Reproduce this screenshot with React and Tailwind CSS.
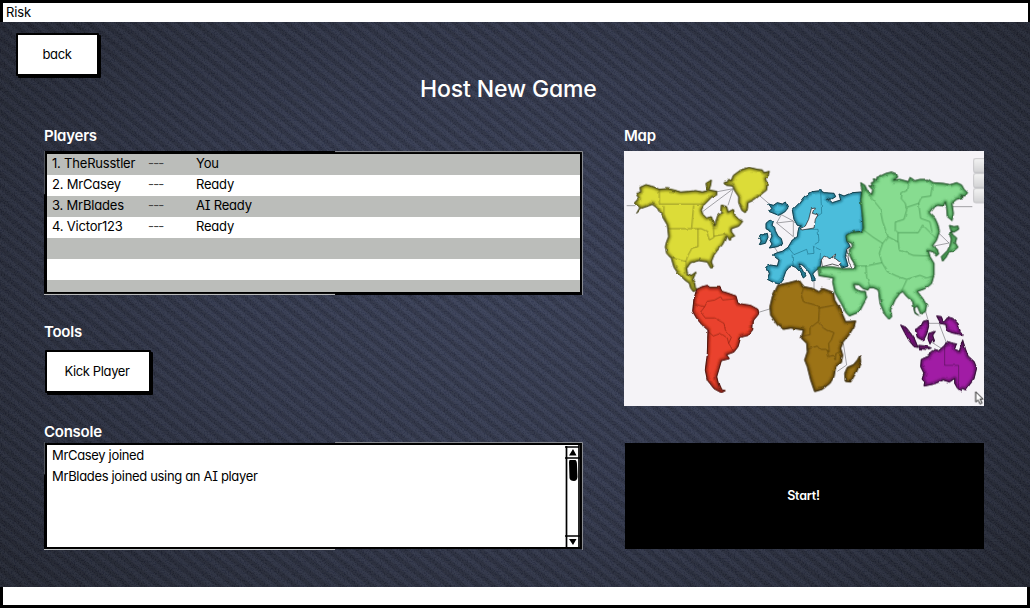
import React from "react";

const players = [
  ["1. TheRusstler", "You"],
  ["2. MrCasey", "Ready"],
  ["3. MrBlades", "AI Ready"],
  ["4. Victor123", "Ready"],
  null,
  null,
  null,
];

function Land({ id, d, fill, shade, lines }) {
  return (
    <g strokeLinejoin="round">
      <clipPath id={id}>
        <path d={d} />
      </clipPath>
      <path d={d} fill={fill} />
      <g clipPath={`url(#${id})`}>
        <path d={d} fill="none" stroke={shade} strokeWidth="12" strokeOpacity="0.75" filter="url(#soft)" />
      </g>
      {lines && <path d={lines} fill="none" stroke={shade} strokeOpacity="0.75" strokeWidth="2.2" />}
      <path d={d} fill="none" stroke={shade} strokeWidth="3" />
      <path d={d} fill="none" stroke="#111" strokeOpacity="0.55" strokeWidth="2.2" />
    </g>
  );
}

function WorldMap() {
  return (
    <svg viewBox="0 3 1080 765" className="block h-[255px] w-[360px] bg-[#f5f3f7]">
      <defs>
        <filter id="soft" x="-10%" y="-10%" width="120%" height="120%">
          <feGaussianBlur stdDeviation="3" />
        </filter>
        <filter id="rough" x="0" y="0" width="100%" height="100%">
          <feTurbulence type="fractalNoise" baseFrequency="0.05" numOctaves="1" seed="4" />
          <feDisplacementMap in="SourceGraphic" scale="8" xChannelSelector="R" yChannelSelector="G" />
        </filter>
        <linearGradient id="tab" x1="0" y1="0" x2="0" y2="1">
          <stop offset="0" stopColor="#f4f4f4" />
          <stop offset="1" stopColor="#d2d2d4" />
        </linearGradient>
      </defs>
      <g fill="none" stroke="#77777c" strokeWidth="2">
        <path d="M8 167H34M270 127L328 116L237 184M328 116L312 166M408 138L436 162M983 170H1045M472 194L508 213L458 219L472 194M458 219L508 260M508 213V260M450 290L462 308" />
        <path d="M404 487L440 476M570 390V418M655 487L663 475M945 250L975 279L930 288M905 485L915 520L945 520L966 575M920 575L960 600M658 580L668 645L640 664" />
      </g>
      <g filter="url(#rough)">
        <Land
          id="na"
          fill="#dcdc39"
          shade="#5b5a14"
          d="M30 160L44 145L36 130L50 126L48 112L66 104L88 110L106 118L130 116L150 120L170 126L195 124L215 122L235 126L250 122L246 100L262 90L260 105L255 120L278 124L278 135L262 142L250 155L240 165L232 180L236 192L248 204L262 200L266 210L272 230L276 212L282 195L290 190L292 165L308 170L312 186L328 178L332 195L345 208L356 214L345 228L322 236L322 245L332 258L322 262L318 272L308 258L295 285L285 295L270 315L262 335L268 352L260 354L250 336L225 332L200 338L188 355L190 370L202 376L216 366L206 390L212 400L214 412L220 418L208 425L200 414L196 400L180 388L160 367L150 352L142 325L128 310L124 290L128 275L134 260L130 225L112 195L100 175L85 163L72 168L52 175L38 190L48 172Z"
          lines="M106 118V162H240M120 168V192L133 236H232M209 166L203 234M222 236V290L204 294L192 316L186 334L160 328L134 318M232 236L248 244L256 270L270 262L268 228M270 258L306 252M186 334L188 355"
        />
        <Land
          id="gl"
          fill="#dcdc39"
          shade="#5b5a14"
          d="M300 98L310 96L314 88L322 92L328 76L350 60L375 52L400 58L415 60L420 68L436 64L432 78L424 86L430 100L428 120L408 136L390 150L372 158L370 176L364 188L354 182L344 158L344 140L332 122L326 108L304 106Z"
        />
        <g transform="translate(360 90)">
          <Land
            id="eu"
            fill="#4bbddb"
            shade="#17647a"
            d="M352 36L358 90L358 152L330 158L308 165L308 182L318 198L308 210L304 230L312 258L295 264L280 250L265 242L248 245L232 242L228 262L215 272L206 282L214 298L204 300L200 285L190 270L175 255L165 252L178 275L186 287L178 294L170 278L155 262L145 258L135 262L125 275L118 295L105 312L90 308L70 298L76 280L68 262L78 255L100 258L105 240L85 225L100 218L115 214L132 202L145 180L160 170L162 155L165 142L172 138L160 136L150 118L145 90L165 70L180 50L205 35L230 32L240 38L270 40L275 50L262 58L250 54L265 68L290 60L285 42L300 48L325 38Z"
            lines="M230 32L233 100L216 112M170 148L222 148L225 185L208 196L210 220L192 222L188 208L150 224L132 202M144 224L148 258M210 200L230 210L228 240"
          />
          <path d="M168 146L184 138L194 118L202 86L214 84L208 100L222 104L214 118L210 144L174 150Z M232 240L240 228L258 236L275 222L272 234L292 250L285 258L265 252L235 260Z M308 208L320 200L325 215L322 235L336 255L326 266L315 247Z" fill="#f5f3f7" stroke="#222" strokeWidth="2.2" />
          <Land id="ice" fill="#4bbddb" shade="#17647a" d="M74 72L88 76L100 68L115 72L124 66L132 84L122 96L104 106L84 98L74 94L84 86Z" />
          <Land id="gb" fill="#4bbddb" shade="#17647a" d="M66 130L80 118L88 124L84 136L92 142L94 152L102 168L112 176L116 192L100 200L76 204L84 192L78 182L84 168L76 152L66 146Z" />
          <Land id="ie" fill="#4bbddb" shade="#17647a" d="M50 166L70 160L72 172L64 190L46 194L52 182L44 176Z" />
        </g>
        <Land
          id="sa"
          fill="#ea432d"
          shade="#761a10"
          d="M218 418L234 410L250 406L258 412L288 412L294 424L308 428L336 438L342 460L380 466L402 478L404 492L388 512L386 540L372 556L350 562L342 590L330 606L308 614L316 626L292 632L284 660L278 680L284 704L290 718L304 722L292 728L270 716L250 690L244 660L250 610L252 540L234 525L218 505L206 484L210 446Z"
          lines="M208 460L242 470L250 454L272 450L290 440L296 450L336 446M242 470L230 486L244 504L272 504L300 520L304 540L322 562L314 580L330 606M252 544L268 558L290 550L310 564L314 580"
        />
        <g transform="translate(360 90)">
          <Land
            id="af"
            fill="#9c7316"
            shade="#4a3508"
            d="M102 315L135 308L165 300L180 320L205 325L225 335L235 325L268 337L272 360L290 390L305 425L335 423L330 440L315 465L298 485L290 505L296 525L292 548L275 560L270 590L258 610L235 628L212 635L200 600L190 560L182 540L190 515L188 490L172 475L178 450L140 444L118 448L100 435L80 405L78 380L85 350Z"
            lines="M180 320L172 345L180 366L210 374L226 384L270 376M226 384L224 424L198 444V464L178 468M224 428L240 446L270 458L262 480L254 490L256 516L246 508H228L220 498L190 508M250 510L254 530L268 526L274 540L276 520L290 515"
          />
          <Land id="mg" fill="#9c7316" shade="#4a3508" d="M348 526L350 546L338 575L320 606L304 604L302 580L310 562L328 554L340 540Z" />
        </g>
        <g transform="translate(528 0)">
          <Land
            id="as"
            fill="#87dc90"
            shade="#2f7a3a"
            d="M182 98L195 106L200 122L215 133L218 120L206 107L216 108L214 98L222 96L220 86L232 90L230 82L245 76L258 70L275 66L290 72L293 82L280 90L300 88L325 95L330 82L345 92L360 88L385 88L400 98L430 100L450 104L470 98L485 105L492 118L503 128L495 138L482 136L490 142L470 148L456 160L460 190L456 212L442 200L440 175L436 156L430 168L414 166L400 172L388 188L405 205L412 220L418 245L410 270L398 287L412 298L416 312L408 318L400 306L385 302L390 320L402 340L402 375L395 400L385 410L370 418L352 424L368 445L380 465L376 485L362 492L352 468L342 475L346 488L356 496L345 490L338 455L320 440L308 425L300 430L285 450L272 480L275 500L267 508L255 495L240 460L235 420L220 413L208 413L204 420L190 416L176 404L162 403L165 416L180 424L196 424L200 445L190 463L178 486L148 498L138 488L125 463L105 428L98 396L100 384L57 377L54 352L92 350L130 356L165 355L165 345L150 318L148 298L158 290L155 280L142 275L138 258L150 248L185 245L190 235L188 205L182 150L186 120Z"
            lines="M190 115L218 148L240 175L248 215L264 260L294 276V248L286 240V216L312 208L320 180L316 160L304 146L306 128L320 122L324 96M320 172L356 160L364 142L392 138L398 100M356 160L362 205L390 215L396 245M294 248H355L368 225L408 265M295 276L298 300L340 316L390 318M188 238L220 262L248 280L264 260M248 280L238 310L246 338L198 348L200 380L210 410M246 338L262 365L290 378L320 388L360 376L380 384L400 378M198 348L165 348M320 390L304 425"
          />
          <Land id="jp" fill="#87dc90" shade="#2f7a3a" d="M448 226L462 230L474 228L476 238L462 246L454 244L458 254L470 264L466 278L474 292L462 302L446 308L438 322L428 334L424 320L442 302L450 286L454 268L450 256L454 246Z" />
        </g>
        <g transform="translate(528 378)">
          <Land id="su" fill="#a11fa5" shade="#45094a" d="M302 147L318 154L332 172L344 190L354 214L342 212L326 192L314 170Z" />
          <Land id="bo" fill="#a11fa5" shade="#45094a" d="M346 160L362 152L370 136L384 132L386 150L380 174L370 194L352 184Z" />
          <Land id="ja" fill="#a11fa5" shade="#45094a" d="M356 208L378 210L394 216L380 220L358 218Z" />
          <Land id="ce" fill="#a11fa5" shade="#45094a" d="M386 172L406 166L398 178L404 196L396 192L390 204L384 188Z" />
          <Land id="ng" fill="#a11fa5" shade="#45094a" d="M410 120L424 122L430 138L442 122L460 128L474 142L480 164L490 178L472 174L454 170L440 162L438 146L422 142Z" />
          <Land
            id="au"
            fill="#a11fa5"
            shade="#45094a"
            d="M434 208L440 196L460 202L470 204L462 218L478 226L488 192L496 218L504 240L522 256L530 276L522 308L506 330L498 342L488 338L480 344L472 336L464 322V308L448 318L430 312L402 324L372 330L374 318L366 310L372 292L362 272L364 250L386 240L392 228L404 220L416 224Z"
            lines="M434 208V268H476V336"
          />
        </g>
      </g>
      <g fill="url(#tab)" stroke="#bdbdc0" strokeWidth="3">
        <rect x="1048" y="25" width="50" height="43" rx="7" />
        <rect x="1048" y="70" width="50" height="43" rx="7" />
        <rect x="1048" y="115" width="50" height="43" rx="7" />
      </g>
      <path d="M1055 725V756L1062 750L1068 762L1074 759L1068 747H1077Z" fill="#fff" stroke="#222" strokeWidth="3" />
    </svg>
  );
}

function Backdrop() {
  return (
    <>
      <div className="absolute inset-0 bg-[radial-gradient(ellipse_62%_78%_at_50%_46%,#3b425a_0%,#343a4f_45%,#242834_100%)]" />
      <div className="absolute inset-0 bg-[repeating-linear-gradient(39deg,rgba(0,0,0,0.17)_0px,rgba(0,0,0,0.17)_3px,rgba(0,0,0,0)_5px,rgba(0,0,0,0)_8px,rgba(0,0,0,0.17)_9.6px)]" />
      <svg className="absolute inset-0 h-full w-full opacity-[0.06]">
        <filter id="grain">
          <feTurbulence type="fractalNoise" baseFrequency="0.7" numOctaves="2" />
          <feColorMatrix values="1.6 0 0 0 -0.55  1.6 0 0 0 -0.55  1.6 0 0 0 -0.5  0 0 0 0 1" />
        </filter>
        <rect width="100%" height="100%" filter="url(#grain)" />
      </svg>
    </>
  );
}

function Label({ children, className = "" }) {
  return <h2 className={`relative top-px text-[15px] leading-5 font-semibold tracking-[-0.25px] text-white ${className}`}>{children}</h2>;
}

/* Pale slivers left along the hand-drawn outline. */
function SketchEdge() {
  return (
    <svg className="pointer-events-none absolute -inset-[3px] h-[calc(100%+6px)] w-[calc(100%+6px)]" viewBox="0 0 100 100" preserveAspectRatio="none">
      <g fill="none" strokeWidth="1">
        <path d="M0 99.6H54" stroke="#c9cbca" vectorEffect="non-scaling-stroke" />
        <path d="M54 .4H99.9V100" stroke="#8d8f94" vectorEffect="non-scaling-stroke" />
        <path d="M.1 30V0" stroke="#55585f" vectorEffect="non-scaling-stroke" />
      </g>
    </svg>
  );
}

function Scrollbar() {
  return (
    <svg viewBox="0 0 15 102" className="block h-[102px] w-[15px] shrink-0">
      <path d="M1.5 1V102M0 2H14M0 13H15M0 91H15M14 0V102" stroke="#000" strokeWidth="1.7" fill="none" />
      <path d="M4 10.500L8 4L11.500 10.500ZM4 94H11.500L8 100Z" />
      <path d="M4.500 15H10.500Q12 16 12 20L12.500 32Q12 36 9 36Q5 36 4.500 33L4 17Z" />
    </svg>
  );
}

export default function App() {
  return (
    <div className="relative flex h-[608px] w-[1030px] flex-col overflow-hidden bg-[#303648] font-['Inter','Open_Sans',sans-serif] text-[13px] tracking-[-0.2px] text-black [font-feature-settings:'cv11','cv08']">
      <Backdrop />
      <header className="relative flex h-[22px] items-center border-t-[3px] border-r-2 border-l-[3px] border-black bg-white pl-[3px]">
        <span className="tracking-[-0.1px]">Risk</span>
      </header>

      <main className="relative flex h-[565px] flex-col">
        <button className="mt-[11px] ml-4 h-[43px] w-[83px] rounded-[1px] border-2 border-black bg-white pr-px tracking-[-0.4px] shadow-[2px_2px_0_#000]">back</button>
        <h1 className="ml-[420px] h-[26px] text-[23px] leading-[26px] font-medium tracking-[-0.13px] whitespace-nowrap text-white">Host New Game</h1>

        <div className="mt-[23px] ml-11 flex gap-[42px]">
          <section className="flex w-[538px] flex-col">
            <Label>Players</Label>
            <div className="relative mt-[6px] h-[144px] border-t-[3px] border-r-2 border-b-[3px] border-l-[3px] border-black bg-white">
              <div className="h-full overflow-hidden">
                {players.map((p, i) => (
                  <div key={i} className={`flex h-[21px] items-center pb-[2px] pl-[5px] ${i % 2 ? "bg-white" : "bg-[#bbbdba]"}`}>
                    {p && (
                      <>
                        <span className="w-[96px] whitespace-nowrap">{p[0]}</span>
                        <span className="w-12 tracking-[-0.8px] text-[#444]">---</span>
                        <span>{p[1]}</span>
                      </>
                    )}
                  </div>
                ))}
              </div>
              <SketchEdge />
            </div>
            <Label className="mt-[26px]">Tools</Label>
            <button className="mt-[9px] ml-px h-[43px] w-[106px] rounded-[1px] border-2 border-black bg-white pr-0.5 tracking-[-0.38px] shadow-[2px_2px_0_#000]">Kick Player</button>
            <Label className="mt-[28px]">Console</Label>
            <div className="relative mt-[2px] flex h-[106px] justify-between border-y-2 border-r-2 border-l-[3px] border-black bg-white">
              <div className="pl-[5px] leading-[21px] tracking-[-0.33px]">
                <p>MrCasey joined</p>
                <p>MrBlades joined using an AI player</p>
              </div>
              <Scrollbar />
              <SketchEdge />
            </div>
          </section>

          <section className="flex w-[360px] flex-col">
            <Label>Map</Label>
            <div className="mt-[6px]">
              <WorldMap />
            </div>
            <button className="mt-[37px] ml-px h-[106px] bg-black pr-0.5 text-[12.5px] font-semibold text-white">Start!</button>
          </section>
        </div>
      </main>

      <footer className="relative h-[21px] border-r-[3px] border-b-[3px] border-l-[3px] border-black bg-white" />
    </div>
  );
}
